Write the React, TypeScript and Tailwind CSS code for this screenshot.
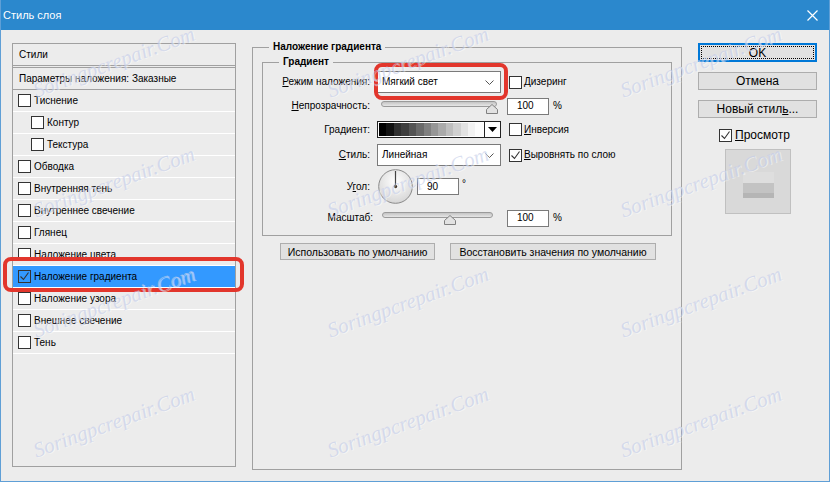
import React from "react";

const layers = [
  { name: "Тиснение", nested: false, checked: false },
  { name: "Контур", nested: true, checked: false },
  { name: "Текстура", nested: true, checked: false },
  { name: "Обводка", nested: false, checked: false },
  { name: "Внутренняя тень", nested: false, checked: false },
  { name: "Внутреннее свечение", nested: false, checked: false },
  { name: "Глянец", nested: false, checked: false },
  { name: "Наложение цвета", nested: false, checked: false },
  { name: "Наложение градиента", nested: false, checked: true, active: true },
  { name: "Наложение узора", nested: false, checked: false },
  { name: "Внешнее свечение", nested: false, checked: false },
  { name: "Тень", nested: false, checked: false },
];

// stepped greys of the gradient swatch
const steps = [0, 18, 48, 62, 84, 106, 128, 150, 170, 190, 208, 226, 242, 252];

const marks = [
  "left-[113px] top-[62px]",
  "left-[407px] top-[62px]",
  "left-[700px] top-[62px]",
  "left-[113px] top-[182px]",
  "left-[407px] top-[182px]",
  "left-[700px] top-[182px]",
  "left-[113px] top-[302px]",
  "left-[407px] top-[302px]",
  "left-[700px] top-[302px]",
  "left-[113px] top-[422px]",
  "left-[407px] top-[422px]",
  "left-[700px] top-[422px]",
];

function Box({ checked = false, white = true }: { checked?: boolean; white?: boolean }) {
  return (
    <span
      className={`flex h-[13px] w-[13px] shrink-0 items-center justify-center border border-[#333] ${
        white ? "bg-white" : "bg-transparent"
      }`}
    >
      {checked && (
        <svg width="11" height="11" viewBox="0 0 11 11">
          <path d="M1.5 5.5 L4.5 8.5 L9.5 1.5" fill="none" stroke="#333" strokeWidth="1.1" />
        </svg>
      )}
    </span>
  );
}

function Select({ value }: { value: string }) {
  return (
    <div className="flex h-[22px] w-[124px] items-center justify-between border border-[#7a7a7a] bg-white pl-[4px] pr-[6px]">
      <span>{value}</span>
      <svg width="9" height="5" viewBox="0 0 9 5">
        <path d="M0.5 0.5 L4.5 4.5 L8.5 0.5" fill="none" stroke="#555" />
      </svg>
    </div>
  );
}

function Field({ value }: { value: string }) {
  return (
    <div className="flex h-[17px] w-[42px] items-center border border-[#7a7a7a] bg-white pl-[9px]">
      {value}
    </div>
  );
}

function Thumb() {
  return (
    <svg width="12" height="10" viewBox="0 0 12 10">
      <path d="M0.5 9.5 V5.5 L6 0.5 L11.5 5.5 V9.5 Z" fill="#e2e2e2" stroke="#808080" />
    </svg>
  );
}

function Button({ children, className = "" }: { children: React.ReactNode; className?: string }) {
  return (
    <div
      className={`flex items-center justify-center border border-[#adadad] bg-[#e1e1e1] ${className}`}
    >
      {children}
    </div>
  );
}

export default function App() {
  return (
    <div className="relative flex h-[482px] w-[830px] flex-col overflow-hidden border-x border-b border-[#5f9fd6] bg-[#ececec] font-['Liberation_Sans',Arial,sans-serif] text-[10px] leading-[14px] text-black">
      {/* title bar */}
      <div className="flex h-[30px] shrink-0 items-center justify-between bg-[#2b88cd] pl-[2px] pr-[11px] text-[11px] text-white">
        <span>Стиль слоя</span>
        <svg width="11" height="11" viewBox="0 0 11 11">
          <path d="M0.5 0.5 L10.5 10.5 M10.5 0.5 L0.5 10.5" stroke="#fff" strokeWidth="1.2" />
        </svg>
      </div>

      <div className="flex items-start pl-[11px] pt-[13px]">
        {/* styles list */}
        <div className="flex h-[424px] w-[224px] shrink-0 flex-col border border-[#a0a0a0]">
          <div className="flex h-[22px] items-center border-b border-[#a0a0a0] pl-[6px]">Стили</div>
          <div className="mt-[1px] flex h-[23px] items-center border-y border-[#a0a0a0] pl-[6px]">
            Параметры наложения: Заказные
          </div>
          {layers.map((l) => (
            <div
              key={l.name}
              className={`flex h-[22px] items-center gap-[3px] border-b border-white ${
                l.nested ? "pl-[18px]" : "pl-[5px]"
              } ${l.active ? "bg-[#3399ff]" : ""}`}
            >
              <Box checked={l.checked} white={!l.active} />
              <span>{l.name}</span>
            </div>
          ))}
        </div>

        {/* gradient overlay settings */}
        <fieldset className="mt-[-3px] ml-[16px] h-[430px] w-[430px] shrink-0 border border-[#a0a0a0]">
          <legend className="ml-[16px] px-[4px] font-bold leading-[14px]">Наложение градиента</legend>

          <fieldset className="mt-[1px] ml-[9px] h-[181px] w-[410px] border border-[#a0a0a0]">
            <legend className="ml-[16px] px-[4px] font-bold leading-[14px]">Градиент</legend>

            <div className="mt-[2px] flex h-[22px] items-center">
              <span className="w-[107px] text-right">
                <span className="underline">Р</span>ежим наложения:
              </span>
              <div className="ml-[7px]">
                <Select value="Мягкий свет" />
              </div>
              <div className="ml-[8px]">
                <Box />
              </div>
              <span className="ml-[2px]">Дизеринг</span>
            </div>

            <div className="mt-[4px] flex h-[18px] items-center">
              <span className="w-[107px] text-right">
                <span className="underline">Н</span>епрозрачность:
              </span>
              <div className="relative ml-[7px] h-[18px] w-[124px]">
                <div className="mt-[4px] ml-[4px] h-[6px] w-[116px] rounded-[3px] border border-[#9a9a9a] bg-[linear-gradient(#c4c4c4,#e6e6e6)]" />
                <div className="absolute top-[7px] left-[109px] flex">
                  <Thumb />
                </div>
              </div>
              <div className="ml-[6px]">
                <Field value="100" />
              </div>
              <span className="ml-[4px]">%</span>
            </div>

            <div className="mt-[6px] flex h-[17px] items-center">
              <span className="w-[107px] text-right">Градиент:</span>
              <div className="ml-[7px] flex h-[17px] w-[124px] border border-[#222] bg-white">
                <div className="m-[1px] flex flex-1">
                  {steps.map((g) => (
                    <div key={g} className="flex-1" style={{ backgroundColor: `rgb(${g},${g},${g})` }} />
                  ))}
                </div>
                <div className="flex w-[16px] items-center justify-center border-l border-[#222]">
                  <svg width="9" height="5" viewBox="0 0 9 5">
                    <path d="M0 0 H9 L4.5 5 Z" fill="#000" />
                  </svg>
                </div>
              </div>
              <div className="ml-[8px]">
                <Box />
              </div>
              <span className="ml-[2px]">
                <span className="underline">И</span>нверсия
              </span>
            </div>

            <div className="mt-[6px] flex h-[22px] items-center">
              <span className="w-[107px] text-right">
                <span className="underline">С</span>тиль:
              </span>
              <div className="ml-[7px]">
                <Select value="Линейная" />
              </div>
              <div className="ml-[8px]">
                <Box checked />
              </div>
              <span className="ml-[2px]">
                <span className="underline">В</span>ыровнять по слою
              </span>
            </div>

            <div className="mt-[3px] flex h-[35px] items-center">
              <span className="w-[107px] text-right">
                У<span className="underline">г</span>ол:
              </span>
              <svg className="ml-[8px]" width="35" height="35" viewBox="0 0 35 35">
                <defs>
                  <radialGradient id="dial" cx="50%" cy="35%" r="65%">
                    <stop offset="0" stopColor="#ffffff" />
                    <stop offset="1" stopColor="#d6d6d6" />
                  </radialGradient>
                </defs>
                <circle cx="17.5" cy="17.5" r="16.8" fill="url(#dial)" stroke="#8a8a8a" />
                <path d="M17.5 17.5 V2" stroke="#444" strokeWidth="1.2" />
                <circle cx="17.5" cy="17.5" r="1.7" fill="#333" />
              </svg>
              <div className="ml-[4px]">
                <Field value="90" />
              </div>
              <span className="ml-[3px] self-start pt-[8px]">°</span>
            </div>

            <div className="mt-[5px] flex h-[18px] items-center">
              <span className="w-[110px] text-right">Масштаб:</span>
              <div className="relative ml-[4px] h-[18px] w-[124px]">
                <div className="mt-[3px] ml-[5px] h-[6px] w-[111px] rounded-[3px] border border-[#9a9a9a] bg-[linear-gradient(#c4c4c4,#e6e6e6)]" />
                <div className="absolute top-[6px] left-[67px] flex">
                  <Thumb />
                </div>
              </div>
              <div className="ml-[6px]">
                <Field value="100" />
              </div>
              <span className="ml-[4px]">%</span>
            </div>
          </fieldset>

          <div className="mt-[7px] ml-[27px] flex gap-[15px] text-[10.5px]">
            <Button className="h-[17px] w-[155px]">Использовать по умолчанию</Button>
            <Button className="h-[17px] w-[206px]">Восстановить значения по умолчанию</Button>
          </div>
        </fieldset>

        {/* buttons */}
        <div className="ml-[16px] flex w-[119px] shrink-0 flex-col text-[12px]">
          <div className="relative flex h-[19px] items-center justify-center border-2 border-[#0078d7] bg-[#e1e1e1]">
            <span className="absolute inset-[1px] border border-dotted border-black" />
            OK
          </div>
          <Button className="mt-[10px] h-[18px]">Отмена</Button>
          <Button className="mt-[10px] h-[18px]">
            Новый стил<span className="underline">ь</span>...
          </Button>
          <div className="mt-[10px] ml-[21px] flex h-[14px] items-center gap-[3px]">
            <Box checked />
            <span>
              <span className="underline">П</span>росмотр
            </span>
          </div>
          <div className="mt-[7px] ml-[27px] flex h-[65px] w-[66px] flex-col items-center border border-[#c0c0c0] bg-[#d9d9d9] pt-[22px]">
            <div className="h-[11px] w-[31px] bg-[#dedede]" />
            <div className="h-[10px] w-[31px] bg-[#c3c3c3]" />
            <div className="h-[5px] w-[31px] bg-[#b5b5b5]" />
          </div>
        </div>
      </div>

      {/* red callouts drawn over the dialog */}
      <div className="pointer-events-none absolute top-[257px] left-[2px] h-[35px] w-[241px] rounded-[8px] border-4 border-[#e2362c]" />
      <div className="pointer-events-none absolute top-[63px] left-[373px] h-[37px] w-[134px] rounded-[8px] border-4 border-[#e2362c]" />

      {/* site watermark */}
      <div className="pointer-events-none absolute inset-0">
        {marks.map((m) => (
          <span
            key={m}
            className={`absolute ${m} -translate-x-1/2 -translate-y-1/2 rotate-[-20deg] font-['Liberation_Serif',serif] text-[21px] whitespace-nowrap text-[#c2cbe8]/60 italic [text-shadow:1px_1px_0_rgba(255,255,255,0.45)]`}
          >
            Soringpcrepair.Com
          </span>
        ))}
      </div>
    </div>
  );
}
